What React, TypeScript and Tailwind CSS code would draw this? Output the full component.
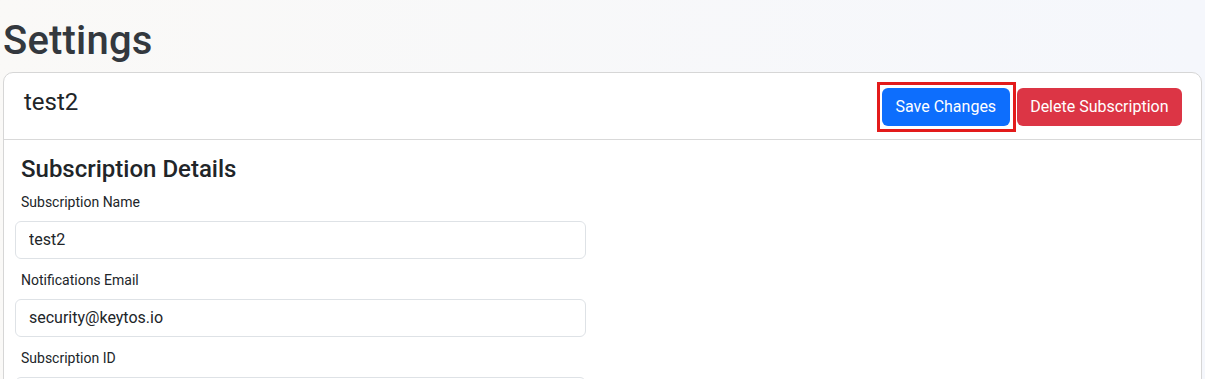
import React from 'react';

const font = { fontFamily: 'Roboto, "Noto Sans", sans-serif' };

interface FieldProps {
  label: string;
  value: string;
}

const Field: React.FC<FieldProps> = ({ label, value }) => (
  <div className="mb-[11px]">
    <label className="block ml-[6px] mb-[8px] text-[14px] leading-[21px] text-[#212529]">{label}</label>
    <input
      readOnly
      value={value}
      className="block w-[571px] h-[38px] px-[13px] text-[16px] text-[#212529] bg-white border border-[#dee2e6] rounded-[6px] outline-none"
    />
  </div>
);

const App: React.FC = () => {
  return (
    <div
      className="min-h-screen bg-gradient-to-r from-[#faf9f7] to-[#f5f7fc] px-[3px] pt-[17px]"
      style={font}
    >
      <h1 className="text-[40px] leading-[48px] font-medium text-[#33383e] mb-[7px] tracking-[0.2px]">Settings</h1>

      <div className="bg-white border border-[#d6d6d6] rounded-[10px] overflow-hidden">
        {/* Header */}
        <div className="flex items-start justify-between pl-[20px] pr-[19px] pt-[9px] pb-[7px] border-b border-[#d9d9d9]">
          <h5 className="mt-[6px] text-[24px] leading-[28.8px] font-normal text-[#212529]">test2</h5>
          <div className="flex items-center gap-[1px]">
            <div className="border-[3px] border-[#e31b1b] py-[3px] pl-[2px] pr-[3px]">
              <button className="h-[38px] px-[13.5px] rounded-[6px] bg-[#0d6efd] text-white text-[16px] leading-[24px]">
                Save Changes
              </button>
            </div>
            <button className="h-[38px] px-[13.5px] rounded-[6px] bg-[#dc3545] text-white text-[16px] leading-[24px]">
              Delete Subscription
            </button>
          </div>
        </div>

        {/* Body */}
        <div className="pl-[11px] pt-[15px] pb-4">
          <h4 className="ml-[6px] mb-[8px] text-[24px] leading-[28.8px] font-medium text-[#212529]">
            Subscription Details
          </h4>
          <Field label="Subscription Name" value="test2" />
          <Field label="Notifications Email" value="security@keytos.io" />
          <Field label="Subscription ID" value="" />
        </div>
      </div>
    </div>
  );
};

export default App;
